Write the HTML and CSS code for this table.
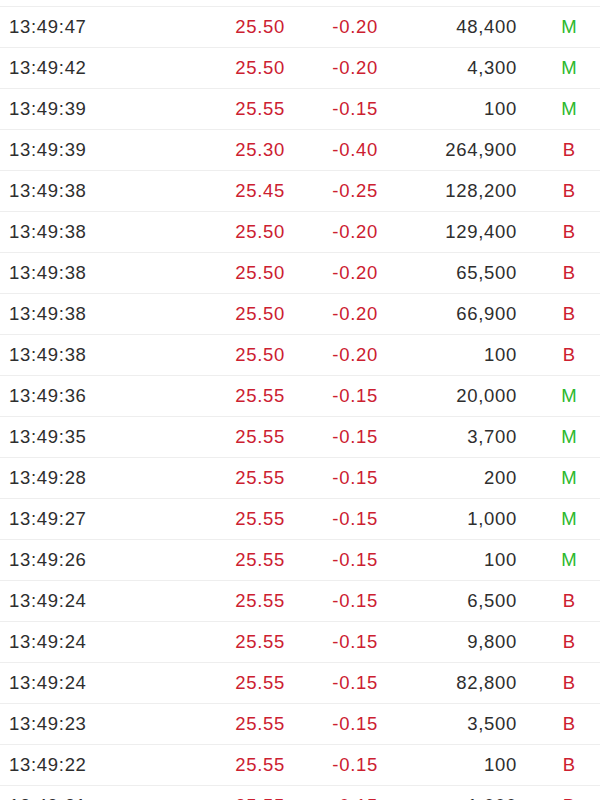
FILE: index.html
```html
<!DOCTYPE html>
<html>
<head>
<meta charset="utf-8">
<link rel="stylesheet" href="styles.css">
</head>
<body>
<div class="list">
  <div class="row"><span class="t">13:49:47</span><span class="p">25.50</span><span class="c">-0.20</span><span class="v">48,400</span><span class="k m">M</span></div>
  <div class="row"><span class="t">13:49:42</span><span class="p">25.50</span><span class="c">-0.20</span><span class="v">4,300</span><span class="k m">M</span></div>
  <div class="row"><span class="t">13:49:39</span><span class="p">25.55</span><span class="c">-0.15</span><span class="v">100</span><span class="k m">M</span></div>
  <div class="row"><span class="t">13:49:39</span><span class="p">25.30</span><span class="c">-0.40</span><span class="v">264,900</span><span class="k b">B</span></div>
  <div class="row"><span class="t">13:49:38</span><span class="p">25.45</span><span class="c">-0.25</span><span class="v">128,200</span><span class="k b">B</span></div>
  <div class="row"><span class="t">13:49:38</span><span class="p">25.50</span><span class="c">-0.20</span><span class="v">129,400</span><span class="k b">B</span></div>
  <div class="row"><span class="t">13:49:38</span><span class="p">25.50</span><span class="c">-0.20</span><span class="v">65,500</span><span class="k b">B</span></div>
  <div class="row"><span class="t">13:49:38</span><span class="p">25.50</span><span class="c">-0.20</span><span class="v">66,900</span><span class="k b">B</span></div>
  <div class="row"><span class="t">13:49:38</span><span class="p">25.50</span><span class="c">-0.20</span><span class="v">100</span><span class="k b">B</span></div>
  <div class="row"><span class="t">13:49:36</span><span class="p">25.55</span><span class="c">-0.15</span><span class="v">20,000</span><span class="k m">M</span></div>
  <div class="row"><span class="t">13:49:35</span><span class="p">25.55</span><span class="c">-0.15</span><span class="v">3,700</span><span class="k m">M</span></div>
  <div class="row"><span class="t">13:49:28</span><span class="p">25.55</span><span class="c">-0.15</span><span class="v">200</span><span class="k m">M</span></div>
  <div class="row"><span class="t">13:49:27</span><span class="p">25.55</span><span class="c">-0.15</span><span class="v">1,000</span><span class="k m">M</span></div>
  <div class="row"><span class="t">13:49:26</span><span class="p">25.55</span><span class="c">-0.15</span><span class="v">100</span><span class="k m">M</span></div>
  <div class="row"><span class="t">13:49:24</span><span class="p">25.55</span><span class="c">-0.15</span><span class="v">6,500</span><span class="k b">B</span></div>
  <div class="row"><span class="t">13:49:24</span><span class="p">25.55</span><span class="c">-0.15</span><span class="v">9,800</span><span class="k b">B</span></div>
  <div class="row"><span class="t">13:49:24</span><span class="p">25.55</span><span class="c">-0.15</span><span class="v">82,800</span><span class="k b">B</span></div>
  <div class="row"><span class="t">13:49:23</span><span class="p">25.55</span><span class="c">-0.15</span><span class="v">3,500</span><span class="k b">B</span></div>
  <div class="row"><span class="t">13:49:22</span><span class="p">25.55</span><span class="c">-0.15</span><span class="v">100</span><span class="k b">B</span></div>
  <div class="row"><span class="t">13:49:21</span><span class="p">25.55</span><span class="c">-0.15</span><span class="v">1,000</span><span class="k b">B</span></div>
</div>
</body>
</html>
```

FILE: styles.css
```css
html, body {
  margin: 0;
  padding: 0;
  background: #ffffff;
  overflow: hidden;
}
.list {
  padding-top: 6px;
  font-family: "Liberation Sans", Arial, sans-serif;
  font-size: 18.5px;
  letter-spacing: 0.7px;
}
.row {
  display: grid;
  grid-template-columns: 180px 96px 93px 139px 83px;
  align-items: center;
  height: 40px;
  padding-left: 9px;
  border-top: 1px solid #eeeeee;
  color: #2e2e2e;
}
.p, .c, .v {
  text-align: right;
}
.p, .c {
  color: #cc2030;
}
.k {
  padding-left: 21px;
  text-align: center;
  letter-spacing: 0;
}
.k.m {
  color: #2db82d;
}
.k.b {
  color: #cc2030;
}
```
